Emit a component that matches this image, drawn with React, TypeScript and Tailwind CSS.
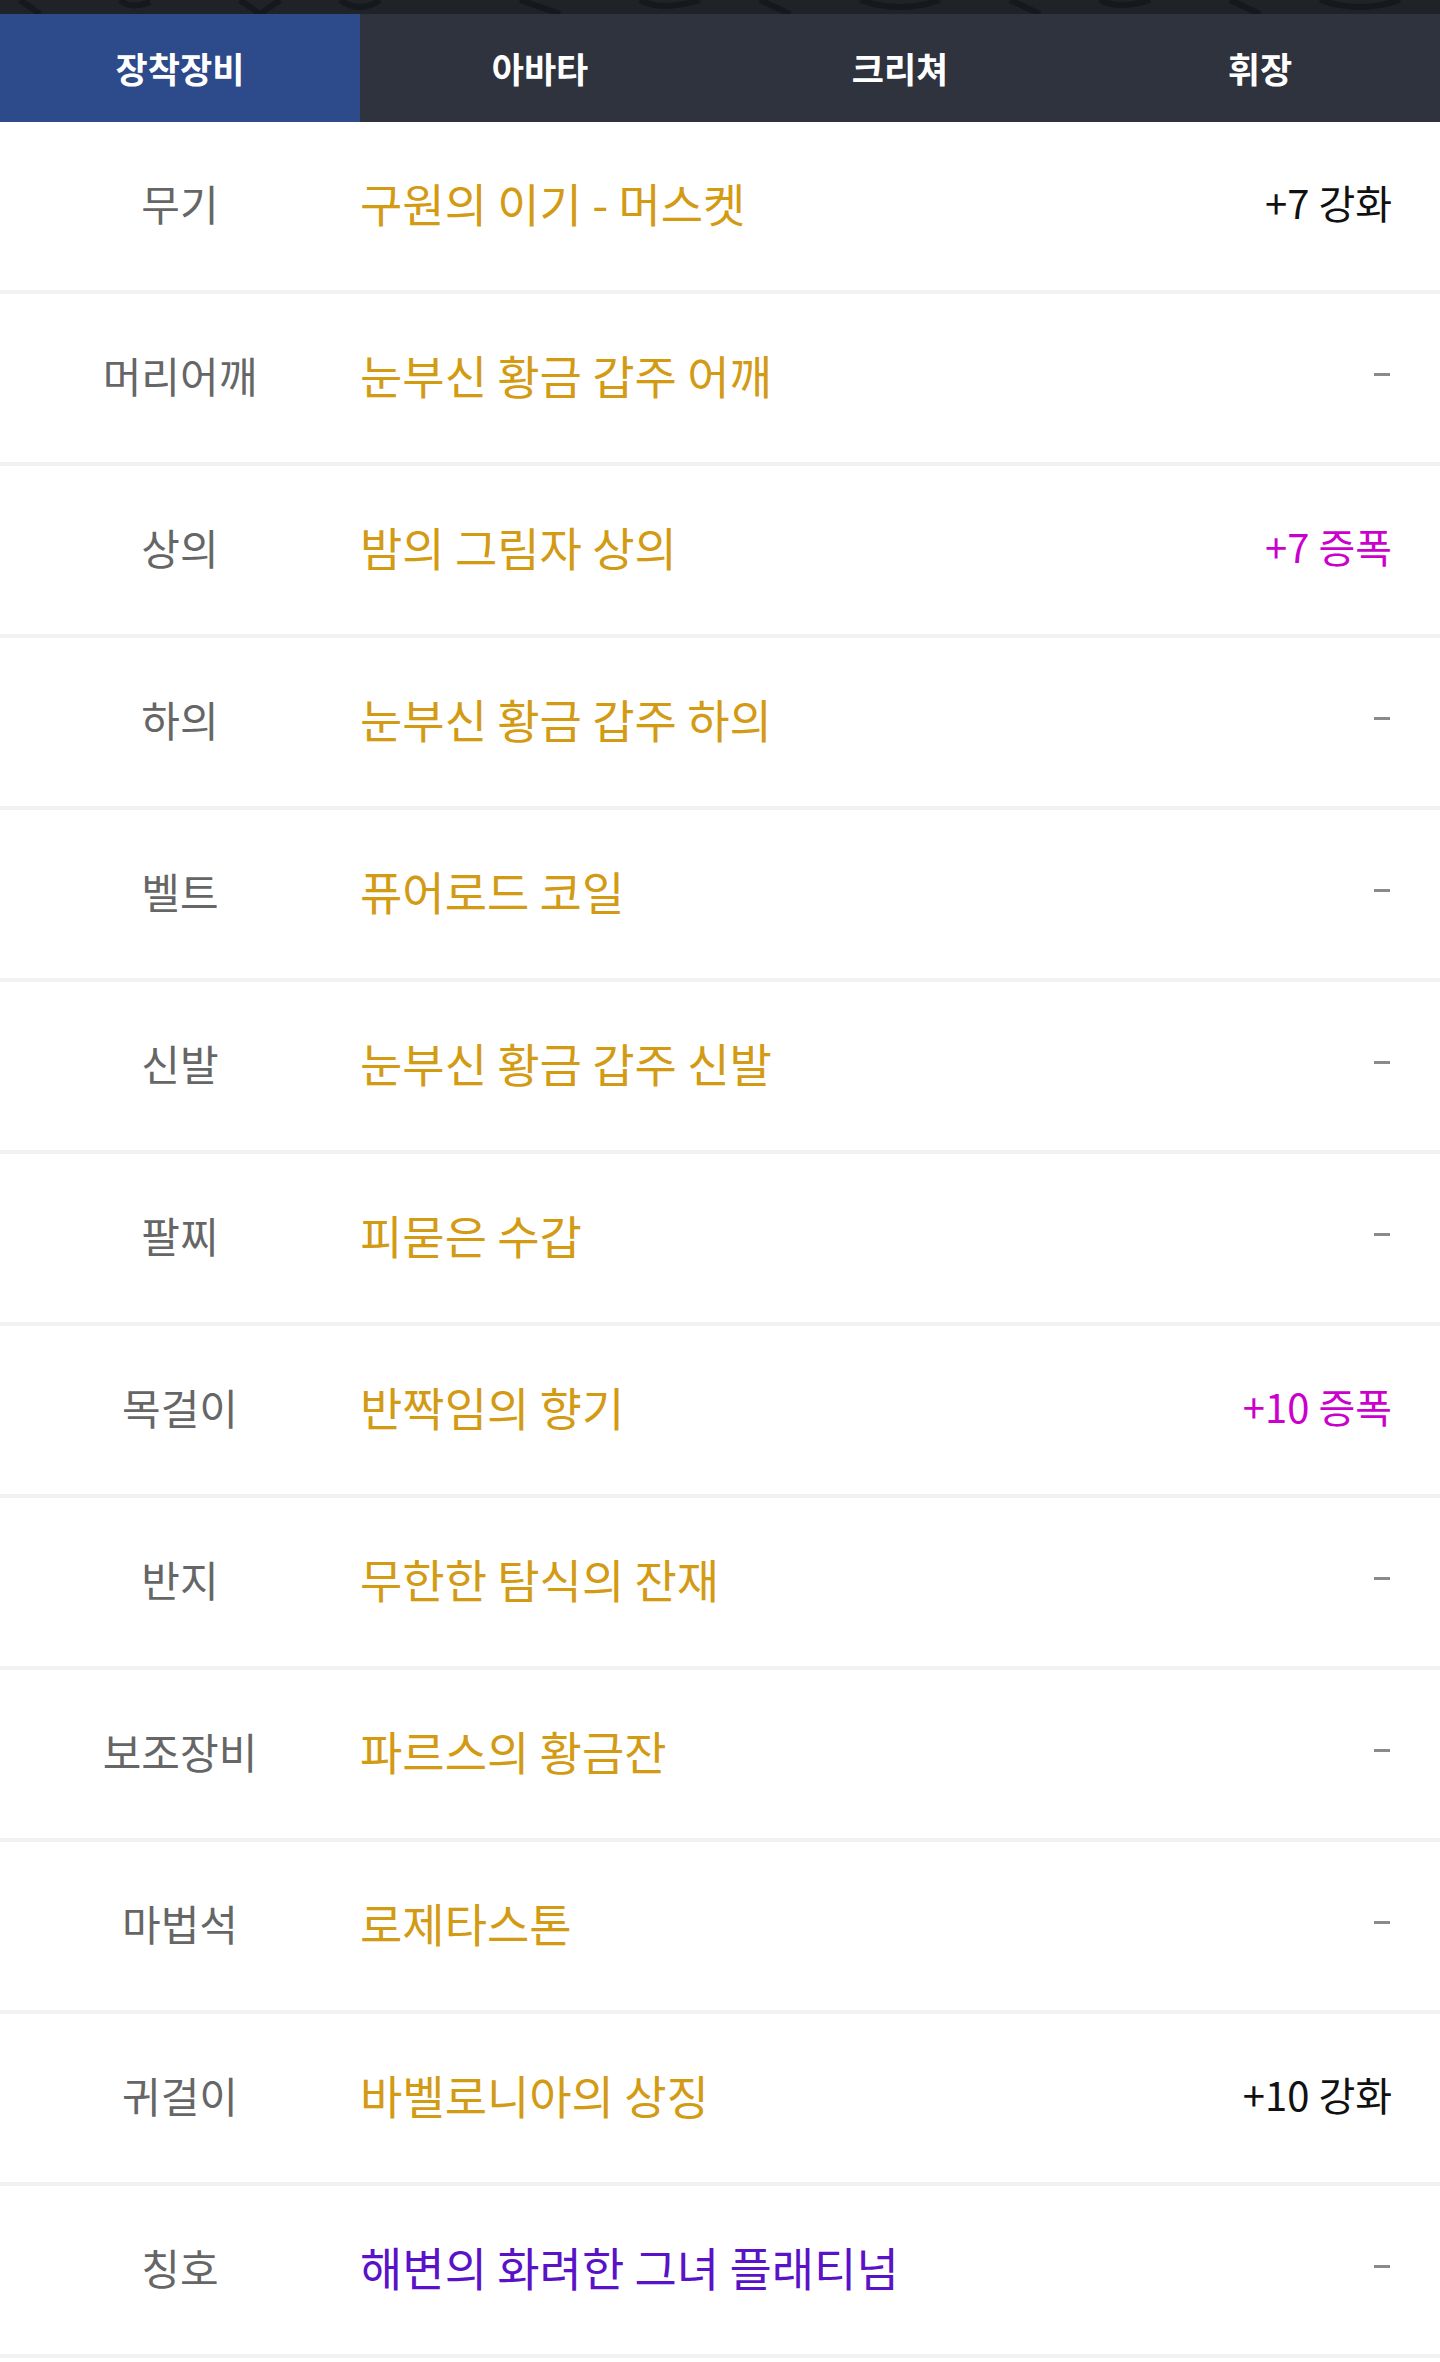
import React, { useState } from "react"

type Item = {
  slot: string
  name: string
  grade?: "gold" | "purple"
  extra?: string
  extraType?: "upgrade" | "amp"
}

const tabs = ["장착장비", "아바타", "크리쳐", "휘장"]

const items: Item[] = [
  { slot: "무기", name: "구원의 이기 - 머스켓", extra: "+7 강화", extraType: "upgrade" },
  { slot: "머리어깨", name: "눈부신 황금 갑주 어깨" },
  { slot: "상의", name: "밤의 그림자 상의", extra: "+7 증폭", extraType: "amp" },
  { slot: "하의", name: "눈부신 황금 갑주 하의" },
  { slot: "벨트", name: "퓨어로드 코일" },
  { slot: "신발", name: "눈부신 황금 갑주 신발" },
  { slot: "팔찌", name: "피묻은 수갑" },
  { slot: "목걸이", name: "반짝임의 향기", extra: "+10 증폭", extraType: "amp" },
  { slot: "반지", name: "무한한 탐식의 잔재" },
  { slot: "보조장비", name: "파르스의 황금잔" },
  { slot: "마법석", name: "로제타스톤" },
  { slot: "귀걸이", name: "바벨로니아의 상징", extra: "+10 강화", extraType: "upgrade" },
  { slot: "칭호", name: "해변의 화려한 그녀 플래티넘", grade: "purple" },
]

const font = { fontFamily: '"Noto Sans CJK KR", "Noto Sans", sans-serif' }

const App = () => {
  const [active, setActive] = useState(0)

  return (
    <div className="w-[1440px] min-h-[2362px] bg-white" style={font}>
      {/* background art strip peeking above the tabs */}
      <div className="h-[14px] w-full bg-[#1f2226] overflow-hidden">
        <svg width="1440" height="14" viewBox="0 0 1440 14">
          <path d="M20 0 L40 14 M120 0 Q130 10 150 2 M240 0 L260 14 L280 0 M340 0 Q360 14 380 0 M520 0 L560 14 M640 0 Q660 12 700 0 M760 0 L790 14 M860 0 Q900 14 940 0 M1010 0 L1040 14 M1100 0 Q1120 10 1150 0 M1230 0 L1260 14 M1320 0 Q1360 14 1400 0" stroke="#15181c" strokeWidth="6" fill="none" />
        </svg>
      </div>

      <nav className="flex h-[108px] bg-[#2e333d]">
        {tabs.map((t, i) => (
          <button
            key={t}
            onClick={() => setActive(i)}
            className={[
              "flex-1 flex items-center justify-center text-white font-bold text-[35px]",
              i === active ? "bg-[#2d4a8a]" : "bg-[#2e333d]",
            ].join(" ")}
          >
            {t}
          </button>
        ))}
      </nav>

      <ul>
        {items.map((it) => (
          <li
            key={it.slot}
            className="flex items-center h-[172px] pb-[8px] border-b-4 border-[#f2f2f2]"
          >
            <span className="w-[360px] text-center text-[42px] text-[#666666]">
              {it.slot}
            </span>
            <span
              className={[
                "flex-1 text-[46px] whitespace-pre",
                it.grade === "purple" ? "text-[#5a12c8]" : "text-[#d39a14]",
              ].join(" ")}
            >
              {it.name}
            </span>
            <span className="pr-[48px] text-[40px]">
              {it.extra ? (
                <span
                  className={
                    it.extraType === "amp" ? "text-[#cc00cc]" : "text-[#111111]"
                  }
                >
                  {it.extra}
                </span>
              ) : (
                <span className="block w-[16px] h-[3px] bg-[#8a8a8a] mr-[2px]" />
              )}
            </span>
          </li>
        ))}
      </ul>
    </div>
  )
}

export default App
